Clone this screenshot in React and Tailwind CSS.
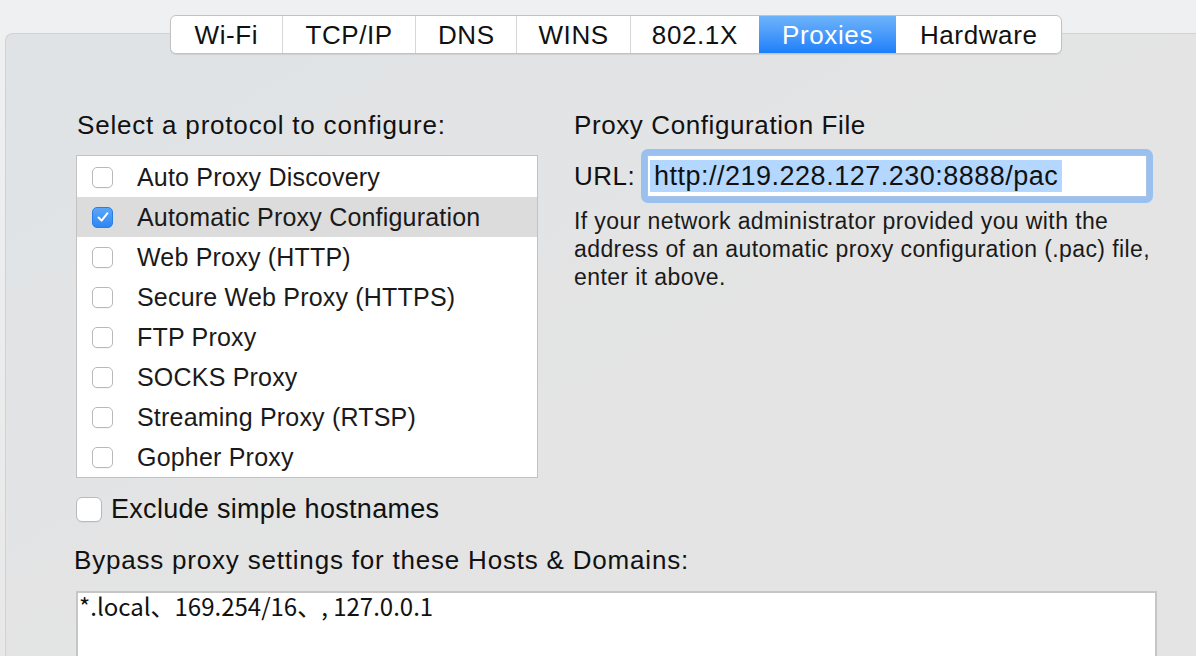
import React from "react";

const tabs = ["Wi-Fi", "TCP/IP", "DNS", "WINS", "802.1X", "Proxies", "Hardware"];
const tabW = [111, 134, 101, 114, 129, 138, 165];

const protocols = [
  "Auto Proxy Discovery",
  "Automatic Proxy Configuration",
  "Web Proxy (HTTP)",
  "Secure Web Proxy (HTTPS)",
  "FTP Proxy",
  "SOCKS Proxy",
  "Streaming Proxy (RTSP)",
  "Gopher Proxy",
];

function Box({ checked, size = "small" }) {
  const dim = size === "small" ? "w-[21px] h-[21px] rounded-[5px]" : "w-[26px] h-[25px] rounded-[6px]";
  if (checked) {
    return (
      <div className={`${dim} flex items-center justify-center bg-gradient-to-b from-[#5aa6f8] to-[#2f86f3] border border-[#2a7de6]`}>
        <svg width="14" height="14" viewBox="0 0 14 14">
          <path d="M2.5 7.5 L5.6 10.6 L11.5 3.2" fill="none" stroke="white" strokeWidth="2" strokeLinecap="round" strokeLinejoin="round" />
        </svg>
      </div>
    );
  }
  return <div className={`${dim} bg-white border border-[#b9b9b9] shadow-[0_1px_0_rgba(0,0,0,0.04)]`} />;
}

export default function App() {
  return (
    <div
      className="w-[1196px] h-[656px] overflow-hidden bg-gradient-to-b from-[#eef0f2] to-[#e8e8e8] text-[#111]"
      style={{ fontFamily: '"Liberation Sans", Arial, sans-serif' }}
    >
      <div className="pt-[15px]">
        <div className="ml-[170px] relative z-10 flex h-[39px] w-[892px] rounded-[6px] border border-[#c2c2c2] bg-white shadow-[0_1px_1px_rgba(0,0,0,0.08)] overflow-hidden">
          {tabs.map((t, i) => {
            const active = t === "Proxies";
            return (
              <div
                key={t}
                style={{ width: tabW[i] }}
                className={`flex items-center justify-center text-[26px] tracking-[0.6px] leading-none ${
                  i > 0 && !active && tabs[i - 1] !== "Proxies" ? "border-l border-[#d6d6d6]" : ""
                } ${active ? "bg-gradient-to-b from-[#6db3fa] to-[#1b7ffa] text-white" : "text-[#111]"}`}
              >
                {t}
              </div>
            );
          })}
        </div>

        <div className="-mt-[21px] ml-[5px] h-[700px] rounded-tl-[8px] border-l border-t border-[#cfd3d6] bg-gradient-to-br from-[#dfe3e6] via-[#e4e4e4] to-[#e4e4e4]">
          <div className="pt-[77px] pl-[70px] flex">
            <div className="w-[462px] shrink-0">
              <div className="text-[26px] tracking-[0.8px] leading-[28px] pl-[1px]">Select a protocol to configure:</div>
              <div className="mt-[16px] h-[323px] border border-[#c2c2c2] bg-white pt-[1px]">
                {protocols.map((p, i) => (
                  <div key={p} className={`h-[40px] flex items-center ${i === 1 ? "bg-[#dcdcdc]" : ""}`}>
                    <div className="ml-[15px]">
                      <Box checked={i === 1} />
                    </div>
                    <span className="ml-[24px] text-[25px] tracking-[0.2px] leading-none text-[#1a1a1a]">{p}</span>
                  </div>
                ))}
              </div>
              <div className="mt-[18px] flex items-center">
                <Box size="large" />
                <span className="ml-[9px] text-[27px] tracking-[0.3px] leading-none">Exclude simple hostnames</span>
              </div>
            </div>

            <div className="ml-[36px] flex-1">
              <div className="text-[26px] tracking-[0.6px] leading-[28px]">Proxy Configuration File</div>
              <div className="mt-[10px] flex items-center">
                <span className="w-[67px] text-[26px] tracking-[0.5px] leading-none">URL:</span>
                <div className="w-[512px] h-[54px] rounded-[7px] bg-[#9ac0ef] p-[6px]">
                  <div className="h-full bg-white border border-[#a9c3e6] flex items-center pl-[2px]">
                    <span className="bg-[#b3d7ff] text-[27px] tracking-[0.5px] leading-[32px] px-[4px]">http://219.228.127.230:8888/pac</span>
                  </div>
                </div>
              </div>
              <div className="mt-[4px] text-[23px] tracking-[0.4px] leading-[28px] text-[#1a1a1a]">
                If your network administrator provided you with the
                <br />
                address of an automatic proxy configuration (.pac) file,
                <br />
                enter it above.
              </div>
            </div>
          </div>

          <div className="pl-[68px] mt-[23px]">
            <div className="text-[26px] tracking-[0.8px] leading-[28px]">Bypass proxy settings for these Hosts &amp; Domains:</div>
            <div className="mt-[17px] ml-[2px] w-[1081px] h-[120px] bg-white border-2 border-[#c6c6c6] pl-[1px]">
              <span
                className="text-[24px] leading-[26px] text-[#111]"
                style={{ fontFamily: '"Liberation Sans Narrow", "Noto Sans CJK SC", sans-serif' }}
              >
                *.local、169.254/16、, 127.0.0.1
              </span>
            </div>
          </div>
        </div>
      </div>
    </div>
  );
}
